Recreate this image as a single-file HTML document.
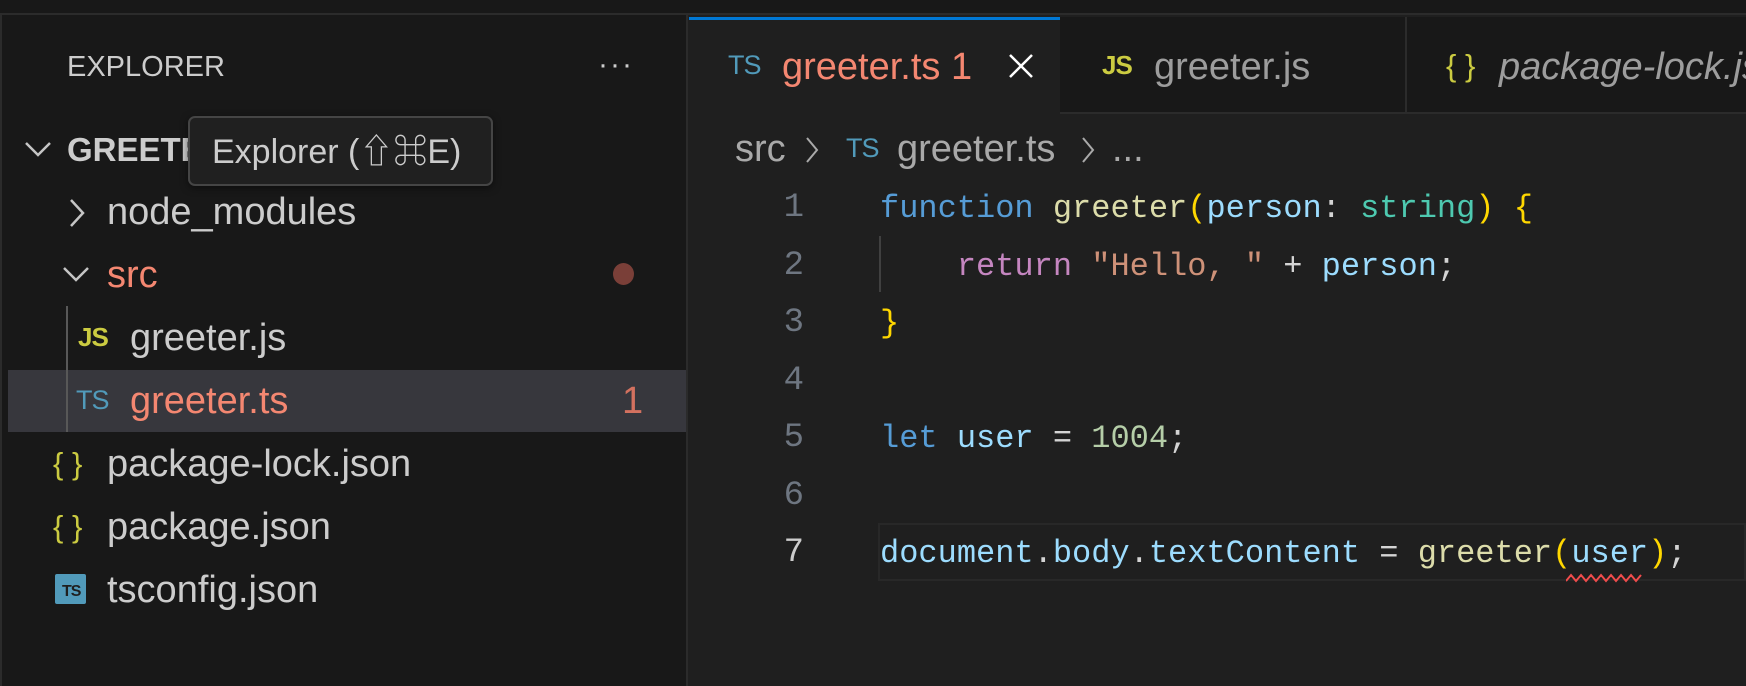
<!DOCTYPE html>
<html><head><meta charset="utf-8"><style>
*{margin:0;padding:0;box-sizing:border-box}
body{width:1746px;height:686px;background:#1f1f1f;overflow:hidden;position:relative;font-family:"Liberation Sans","Noto Sans CJK JP",sans-serif;color:#cccccc}
.a{position:absolute;white-space:pre}
.top{left:0;top:0;width:1746px;height:15px;background:#181818;border-bottom:2px solid #2b2b2b}
.side{left:0;top:15px;width:688px;height:671px;background:#181818;border-right:2px solid #2b2b2b;border-left:2px solid #2b2b2b}
.row{font-size:38px;line-height:40px}
.mono{font-family:"Liberation Mono","DejaVu Sans Mono",monospace;font-size:32px;line-height:40px}
.ts{color:#519aba;font-size:27px;letter-spacing:-1px}
.js{color:#cbcb41;font-weight:bold;font-size:26px;letter-spacing:-1px}
.br{color:#cbcb41;font-size:31px}
</style></head><body>
<div class="a top"></div>
<div class="a side"></div>
<div class="a" style="left:8px;top:370px;width:678px;height:62px;background:#37373d"></div>
<div class="a" style="left:66px;top:306px;width:2px;height:126px;background:#585858"></div>

<div class="a" style="left:67px;top:50px;font-size:29px;line-height:34px;color:#cccccc">EXPLORER</div>
<div class="a" style="left:598px;top:48px;font-size:30px;color:#cccccc;letter-spacing:2px">···</div>

<svg class="a" style="left:24px;top:140px" width="28" height="18"><path d="M2 3 L14 15 L26 3" stroke="#c5c5c5" stroke-width="2.5" fill="none"/></svg>
<div class="a row" style="left:67px;top:130px;font-weight:bold;font-size:33px;color:#cccccc">GREETER</div>

<svg class="a" style="left:68px;top:198px" width="18" height="30"><path d="M3 2 L15 15 L3 28" stroke="#c5c5c5" stroke-width="2.5" fill="none"/></svg>
<div class="a row" style="left:107px;top:192px">node_modules</div>

<svg class="a" style="left:62px;top:265px" width="28" height="18"><path d="M2 3 L14 15 L26 3" stroke="#c5c5c5" stroke-width="2.5" fill="none"/></svg>
<div class="a row" style="left:107px;top:255px;color:#f48771">src</div>
<div class="a" style="left:613px;top:263px;width:21px;height:22px;border-radius:50%;background:#7a3f38"></div>

<div class="a js" style="left:78px;top:322px">JS</div>
<div class="a row" style="left:130px;top:318px">greeter.js</div>

<div class="a ts" style="left:76px;top:385px">TS</div>
<div class="a row" style="left:130px;top:381px;color:#f48771">greeter.ts</div>
<div class="a row" style="left:622px;top:381px;color:#d3715f">1</div>

<div class="a br" style="left:53px;top:446px">{ }</div>
<div class="a row" style="left:107px;top:444px">package-lock.json</div>
<div class="a br" style="left:53px;top:509px">{ }</div>
<div class="a row" style="left:107px;top:507px">package.json</div>
<div class="a" style="left:55px;top:574px;width:31px;height:30px;background:#519aba;border-radius:2px"><span style="position:absolute;left:7px;top:9px;font-size:16px;font-weight:bold;color:#1f1f1f;letter-spacing:-1px">TS</span></div>
<div class="a row" style="left:107px;top:570px">tsconfig.json</div>

<!-- tooltip -->
<div class="a" style="left:188px;top:116px;width:305px;height:70px;background:#202020;border:2px solid #454545;border-radius:7px;box-shadow:0 2px 8px rgba(0,0,0,.5)"></div>
<div class="a row" style="left:212px;top:132px;font-size:34px;color:#cccccc">Explorer (⇧⌘E)</div>

<!-- tabs -->
<div class="a" style="left:689px;top:17px;width:1057px;height:97px;background:#181818;border-bottom:2px solid #2b2b2b"></div>
<div class="a" style="left:689px;top:17px;width:371px;height:99px;background:#1f1f1f;border-top:3px solid #0078d4"></div>
<div class="a" style="left:1405px;top:17px;width:2px;height:97px;background:#2b2b2b"></div>
<div class="a ts" style="left:728px;top:50px">TS</div>
<div class="a row" style="left:782px;top:47px;color:#f48771">greeter.ts 1</div>
<svg class="a" style="left:1008px;top:53px" width="26" height="26"><path d="M2 2 L24 24 M24 2 L2 24" stroke="#ffffff" stroke-width="2.5"/></svg>
<div class="a js" style="left:1102px;top:50px">JS</div>
<div class="a row" style="left:1154px;top:47px;color:#9d9d9d">greeter.js</div>
<div class="a br" style="left:1446px;top:48px">{ }</div>
<div class="a row" style="left:1499px;top:47px;color:#9d9d9d;font-style:italic">package-lock.json</div>

<!-- breadcrumb -->
<div class="a row" style="left:735px;top:129px;color:#a9a9a9">src</div>
<svg class="a" style="left:805px;top:136px" width="14" height="28"><path d="M2 2 L12 14 L2 26" stroke="#a9a9a9" stroke-width="2" fill="none"/></svg>
<div class="a ts" style="left:846px;top:133px">TS</div>
<div class="a row" style="left:897px;top:129px;color:#a9a9a9">greeter.ts</div>
<svg class="a" style="left:1081px;top:136px" width="14" height="28"><path d="M2 2 L12 14 L2 26" stroke="#a9a9a9" stroke-width="2" fill="none"/></svg>
<div class="a row" style="left:1112px;top:129px;color:#a9a9a9">...</div>

<!-- code -->
<div class="a" style="left:878px;top:523px;width:868px;height:58px;border:2px solid #282828"></div>
<div class="a" style="left:879px;top:236px;width:2px;height:56px;background:#404040"></div>
<div class="a mono" style="left:770px;top:180px;width:34px;text-align:right;color:#6e7681;line-height:57.5px;font-size:34px">1<br>2<br>3<br>4<br>5<br>6<br><span style="color:#cccccc">7</span></div>
<div class="a mono" style="left:880px;top:180px;line-height:57.5px;color:#d4d4d4"><span style="color:#569cd6">function</span> <span style="color:#dcdcaa">greeter</span><span style="color:#ffd700">(</span><span style="color:#9cdcfe">person</span>: <span style="color:#4ec9b0">string</span><span style="color:#ffd700">)</span> <span style="color:#ffd700">{</span><br>    <span style="color:#c586c0">return</span> <span style="color:#ce9178">"Hello, "</span> + <span style="color:#9cdcfe">person</span>;<br><span style="color:#ffd700">}</span><br><br><span style="color:#569cd6">let</span> <span style="color:#9cdcfe">user</span> = <span style="color:#b5cea8">1004</span>;<br><br><span style="color:#9cdcfe">document</span>.<span style="color:#9cdcfe">body</span>.<span style="color:#9cdcfe">textContent</span> = <span style="color:#dcdcaa">greeter</span><span style="color:#ffd700">(</span><span style="color:#9cdcfe">user</span><span style="color:#ffd700">)</span>;</div>
<svg class="a" style="left:1566px;top:573px" width="78" height="10"><path d="M0 8 L5 2 L10 8 L15 2 L20 8 L25 2 L30 8 L35 2 L40 8 L45 2 L50 8 L55 2 L60 8 L65 2 L70 8 L75 2" stroke="#f14c4c" stroke-width="2" fill="none"/></svg>
</body></html>
